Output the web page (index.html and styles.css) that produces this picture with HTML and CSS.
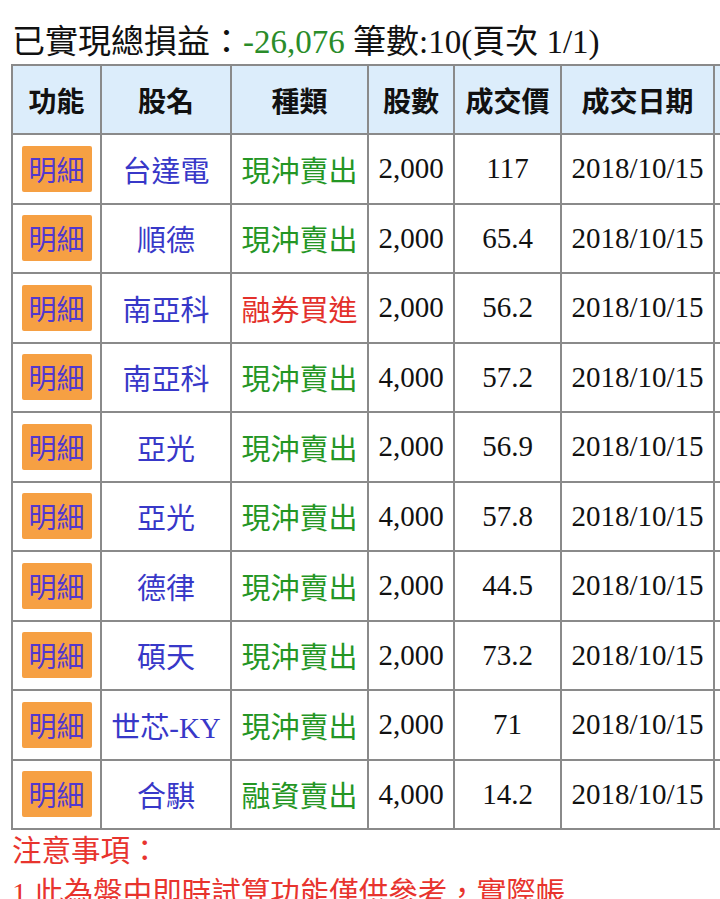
FILE: index.html
```html
<!DOCTYPE html>
<html lang="zh-Hant">
<head>
<meta charset="utf-8">
<title>已實現損益</title>
<link rel="stylesheet" href="styles.css">
</head>
<body>
<div class="page">
  <div class="summary">已實現總損益：<span class="pl">-26,076</span> 筆數:10(頁次 1/1)</div>
  <table class="trades">
    <colgroup>
      <col class="c1"><col class="c2"><col class="c3"><col class="c4"><col class="c5"><col class="c6"><col class="c7">
    </colgroup>
    <thead>
      <tr><th>功能</th><th>股名</th><th>種類</th><th>股數</th><th>成交價</th><th>成交日期</th><th></th></tr>
    </thead>
    <tbody>
      <tr><td><span class="btn">明細</span></td><td class="name">台達電</td><td class="sell">現沖賣出</td><td>2,000</td><td>117</td><td>2018/10/15</td><td></td></tr>
      <tr><td><span class="btn">明細</span></td><td class="name">順德</td><td class="sell">現沖賣出</td><td>2,000</td><td>65.4</td><td>2018/10/15</td><td></td></tr>
      <tr><td><span class="btn">明細</span></td><td class="name">南亞科</td><td class="buy">融券買進</td><td>2,000</td><td>56.2</td><td>2018/10/15</td><td></td></tr>
      <tr><td><span class="btn">明細</span></td><td class="name">南亞科</td><td class="sell">現沖賣出</td><td>4,000</td><td>57.2</td><td>2018/10/15</td><td></td></tr>
      <tr><td><span class="btn">明細</span></td><td class="name">亞光</td><td class="sell">現沖賣出</td><td>2,000</td><td>56.9</td><td>2018/10/15</td><td></td></tr>
      <tr><td><span class="btn">明細</span></td><td class="name">亞光</td><td class="sell">現沖賣出</td><td>4,000</td><td>57.8</td><td>2018/10/15</td><td></td></tr>
      <tr><td><span class="btn">明細</span></td><td class="name">德律</td><td class="sell">現沖賣出</td><td>2,000</td><td>44.5</td><td>2018/10/15</td><td></td></tr>
      <tr><td><span class="btn">明細</span></td><td class="name">碩天</td><td class="sell">現沖賣出</td><td>2,000</td><td>73.2</td><td>2018/10/15</td><td></td></tr>
      <tr><td><span class="btn">明細</span></td><td class="name">世芯-KY</td><td class="sell">現沖賣出</td><td>2,000</td><td>71</td><td>2018/10/15</td><td></td></tr>
      <tr><td><span class="btn">明細</span></td><td class="name">合騏</td><td class="sell">融資賣出</td><td>4,000</td><td>14.2</td><td>2018/10/15</td><td></td></tr>
    </tbody>
  </table>
  <div class="notice">
    <p>注意事項：</p>
    <p>1.此為盤中即時試算功能僅供參考，實際帳務以對帳單為準。</p>
  </div>
</div>
</body>
</html>
```

FILE: styles.css
```css
html, body {
  margin: 0;
  padding: 0;
  overflow: hidden;
  background: #ffffff;
}
body {
  font-family: "Liberation Serif", "Noto Sans CJK TC", serif;
  color: #111;
}
.page {
  padding-left: 11px;
  width: 900px;
}
.summary {
  font-size: 33px;
  line-height: 40px;
  padding-top: 22px;
  padding-left: 1px;
  margin-bottom: 2px;
  white-space: nowrap;
}
.pl {
  color: #2a8c2a;
}
.trades {
  table-layout: fixed;
  border-collapse: separate;
  border-spacing: 0;
  width: 804px;
  border-left: 2px solid #8a8a8a;
  border-top: 2px solid #8a8a8a;
}
.c1 { width: 89px; }
.c2 { width: 130px; }
.c3 { width: 137px; }
.c4 { width: 86px; }
.c5 { width: 107px; }
.c6 { width: 153px; }
.c7 { width: 100px; }
.trades th,
.trades td {
  box-sizing: border-box;
  border-right: 2px solid #8a8a8a;
  border-bottom: 2px solid #8a8a8a;
  padding: 0;
  text-align: center;
  vertical-align: middle;
  white-space: nowrap;
  overflow: hidden;
}
.trades th {
  height: 69px;
  background: #dcedfb;
  font-family: "Noto Sans CJK TC", sans-serif;
  font-weight: 700;
  font-size: 28px;
  color: #111;
}
.trades td {
  height: 69.5px;
  font-size: 29px;
  color: #111;
}
.btn {
  display: inline-block;
  width: 70px;
  height: 46px;
  line-height: 46px;
  background: #f6a043;
  border-radius: 2px;
  color: #5238cf;
  font-family: "Noto Sans CJK TC", sans-serif;
  font-size: 28px;
  vertical-align: middle;
}
.trades td.name {
  color: #3838c8;
}
.trades td.sell {
  color: #249624;
}
.trades td.buy {
  color: #e3302b;
}
.notice {
  color: #e8342e;
  font-size: 29.5px;
  width: 572px;
  padding-left: 1px;
}
.notice p {
  margin: 0;
  line-height: 42px;
}
```
